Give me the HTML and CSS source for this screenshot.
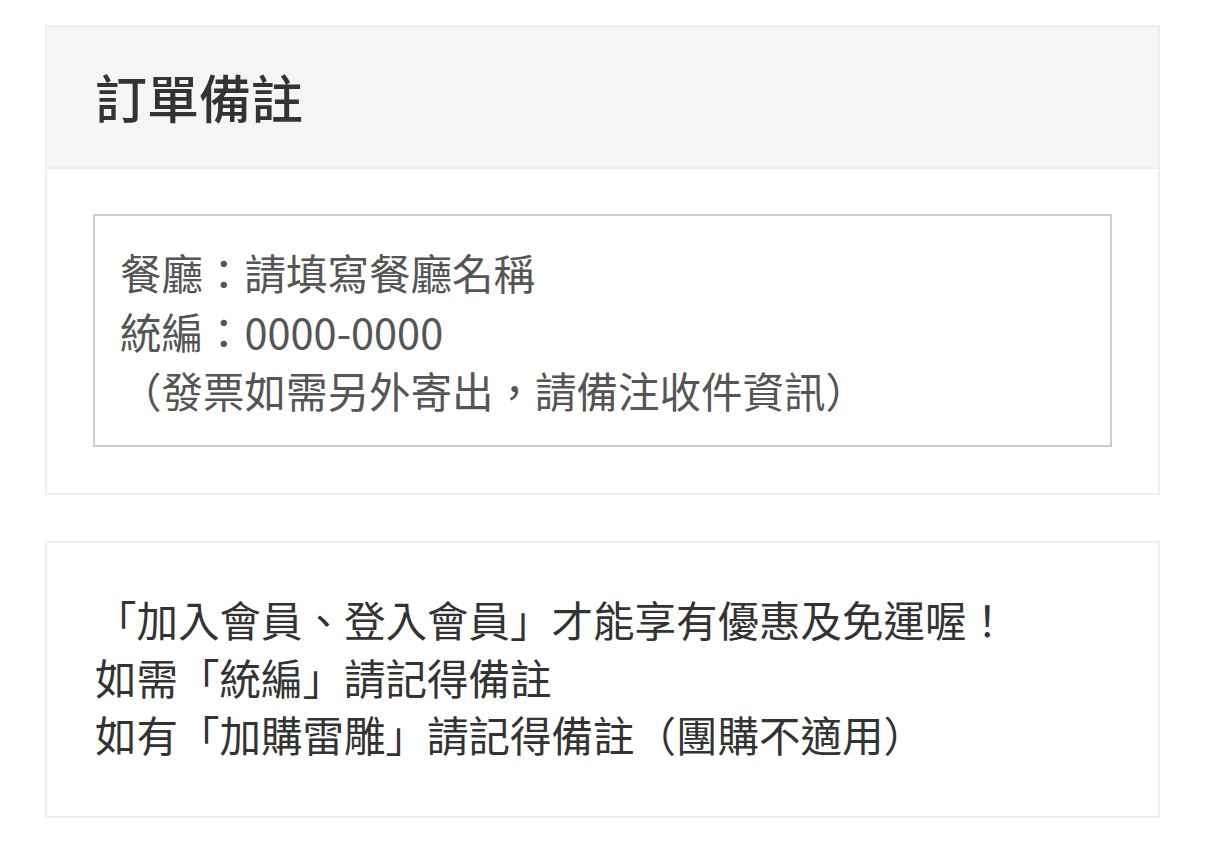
FILE: index.html
```html
<!DOCTYPE html>
<html lang="zh-Hant">
<head>
<meta charset="utf-8">
<link rel="stylesheet" href="styles.css">
</head>
<body>
<main class="page">
  <section class="card">
    <header class="card-head"><h2 class="title">訂單備註</h2></header>
    <div class="card-body">
      <div class="note-box">餐廳：請填寫餐廳名稱<br>統編：0000-0000<br>（發票如需另外寄出，請備注收件資訊）</div>
    </div>
  </section>
  <section class="card info">
    <p class="info-text">「加入會員、登入會員」才能享有優惠及免運喔！<br>如需「統編」請記得備註<br>如有「加購雷雕」請記得備註（團購不適用）</p>
  </section>
</main>
</body>
</html>
```
FILE: styles.css
```css
html, body { margin: 0; padding: 0; background: #fff; }
body { font-family: "Noto Sans CJK TC", "Noto Sans", sans-serif; color: #333; }
.page { padding: 25px 46px 0 45px; display: flex; flex-direction: column; gap: 46px; }
.card { border: 2px solid #eee; background: #fff; }
.card-head { background: #f5f5f5; border-bottom: 2px solid #eee; height: 140px; display: flex; align-items: center; padding-left: 48px; }
.title { margin: 0; font-size: 52px; font-weight: 500; color: #333; line-height: 1; }
.card-body { padding: 45px 46px 46px 46px; }
.note-box { border: 2px solid #ccc; padding: 27px 25px 25px 25px; font-size: 41.5px; line-height: 59px; color: #555; }
.info { padding: 48px 48px 52px 48px; }
.info-text { margin: 0; font-size: 41.5px; line-height: 57.5px; color: #333; }
```
